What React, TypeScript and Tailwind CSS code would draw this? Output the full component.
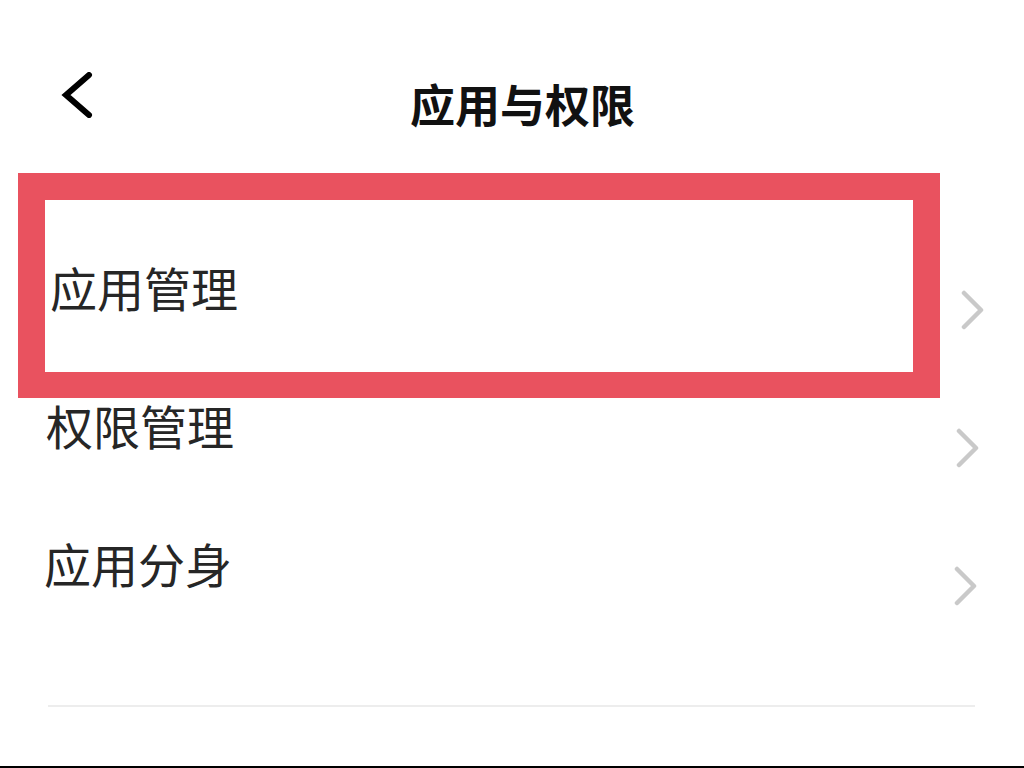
const rows = [
  { label: '应用管理', pad: 'pl-[50px]', arrowPad: 'pr-[38px]' },
  { label: '权限管理', pad: 'pl-[46px]', arrowPad: 'pr-[43px]' },
  { label: '应用分身', pad: 'pl-[44px]', arrowPad: 'pr-[45px]' },
];

function ChevronRight() {
  return (
    <svg width="26" height="40" viewBox="0 0 26 40" fill="none" className="mt-[40px]">
      <path d="M4 3 L21 20 L4 37" stroke="#c9c9c9" strokeWidth="4.5" strokeLinecap="round" strokeLinejoin="round" />
    </svg>
  );
}

export default function App() {
  return (
    <div
      className="relative w-[1024px] h-[768px] bg-white flex flex-col overflow-hidden"
      style={{ fontFamily: '"Noto Sans CJK SC", "Noto Sans", sans-serif' }}
    >
      {/* header */}
      <div className="h-[221px] flex items-start pt-[72px] pl-[60px]">
        <svg width="34" height="46" viewBox="0 0 34 46" fill="none">
          <path d="M29 3 L6 23 L29 43" stroke="#000" strokeWidth="6" strokeLinecap="round" strokeLinejoin="miter" />
        </svg>
        <h1 className="ml-[316px] mt-[9px] text-[45px] leading-none font-bold text-[#111]">应用与权限</h1>
      </div>

      {/* list */}
      <div className="flex flex-col">
        {rows.map((row) => (
          <div key={row.label} className={`h-[138px] flex items-center justify-between ${row.pad} ${row.arrowPad}`}>
            <span className="mb-[8px] text-[47px] leading-none text-[#262626]">{row.label}</span>
            <ChevronRight />
          </div>
        ))}
      </div>

      <div className="mt-[70px] ml-[48px] w-[927px] h-[2px] bg-[#ededed]" />

      <div className="flex-1" />
      <div className="h-[2px] bg-black" />

      {/* annotation box */}
      <div className="absolute left-[18px] top-[173px] w-[922px] h-[225px] border-[27px] border-b-[26px] border-[#e9525f]" />
    </div>
  );
}
